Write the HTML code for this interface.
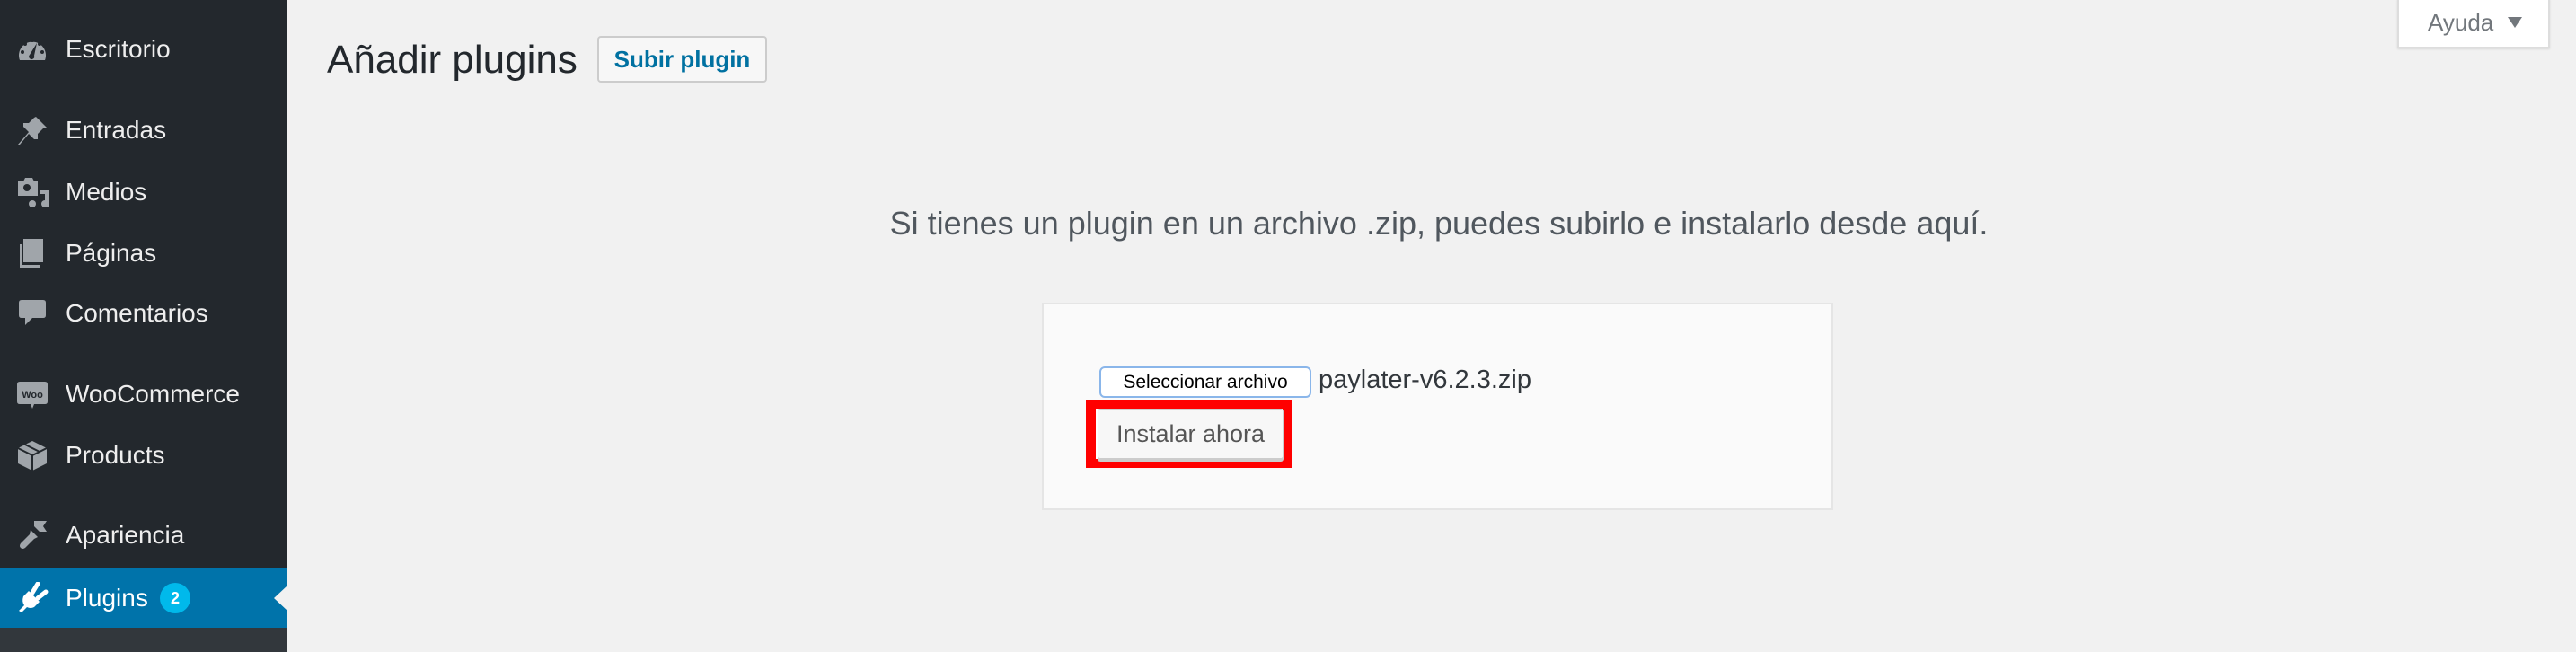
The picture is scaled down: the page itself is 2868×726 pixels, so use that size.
<!DOCTYPE html>
<html><head><meta charset="utf-8"><style>
*{margin:0;padding:0;box-sizing:border-box}
body{width:2868px;height:726px;background:#f1f1f1;font-family:"Liberation Sans",Arial,sans-serif;position:relative;overflow:hidden}
#side{position:absolute;left:0;top:0;width:320px;height:726px;background:#23282d}
.mi{position:absolute;left:0;width:320px;height:40px;color:#eee;font-size:28px;line-height:40px}
.mi span{position:absolute;left:73px;top:0}
.mi svg{position:absolute;left:18px;top:2px;width:36px;height:36px}
#act{position:absolute;left:0;top:633px;width:320px;height:66px;background:#0073aa}
#sub{position:absolute;left:0;top:699px;width:320px;height:27px;background:#32373c}
.abs{position:absolute}
</style></head><body>
<div id="side">
<div id="act"></div><div id="sub"></div>
<div class="mi" style="top:35px"><svg viewBox="0 0 36 36"><path d="M4 30A15 15 0 1 1 32 30Z" fill="#a0a5aa"/><circle cx="7" cy="21" r="2" fill="#23282d"/><circle cx="10" cy="12" r="2" fill="#23282d"/><circle cx="18" cy="8" r="2" fill="#23282d"/><circle cx="26" cy="12" r="2" fill="#23282d"/><circle cx="29" cy="21" r="2" fill="#23282d"/><path d="M23 11L20 25A3 3 0 1 1 15 24Z" fill="#23282d"/></svg><span>Escritorio</span></div>
<div class="mi" style="top:125px"><svg viewBox="0 0 36 36"><path d="M22 3L34 15L30 16L24 22L24 28L20 28L14 22L4 34L2 34L14 20L8 14L8 10L14 10L20 4Z" fill="#a0a5aa"/></svg><span>Entradas</span></div>
<div class="mi" style="top:194px"><svg viewBox="0 0 36 36"><path d="M2 6h6l2-4h8l2 4h4v16h-22z" fill="#a0a5aa"/><circle cx="12" cy="13" r="4" fill="#23282d"/><path d="M26 16h10v18h-4v-14h-6z" fill="#a0a5aa"/><circle cx="18" cy="31" r="4" fill="#a0a5aa"/><circle cx="32" cy="31" r="4" fill="#a0a5aa"/></svg><span>Medios</span></div>
<div class="mi" style="top:262px"><svg viewBox="0 0 36 36"><path d="M8 2h22v26h-22z" fill="#a0a5aa"/><path d="M4 8h3v23h19v3h-22z" fill="#a0a5aa"/></svg><span>Páginas</span></div>
<div class="mi" style="top:329px"><svg viewBox="0 0 36 36"><path d="M6 3h24q3 0 3 3v14q0 3-3 3h-12l-8 8v-8h-4q-3 0-3-3v-14q0-3 3-3z" fill="#a0a5aa"/></svg><span>Comentarios</span></div>
<div class="mi" style="top:419px"><svg viewBox="0 0 36 36"><path d="M4 4h28q3 0 3 3v19q0 3-3 3h-12l-2 5-2-5h-12q-3 0-3-3v-19q0-3 3-3z" fill="#a0a5aa"/><text x="18" y="22" font-size="11" font-weight="bold" text-anchor="middle" fill="#23282d" font-family="Liberation Sans">Woo</text></svg><span>WooCommerce</span></div>
<div class="mi" style="top:487px"><svg viewBox="0 0 36 36"><path d="M18 2L34 10V27L18 35L2 27V10Z" fill="#a0a5aa"/><path d="M2 10L18 18L34 10M18 18V35M10 6L26 14" stroke="#23282d" stroke-width="2" fill="none"/></svg><span>Products</span></div>
<div class="mi" style="top:576px"><svg viewBox="0 0 36 36"><path d="M20 2h14l-4 6 4 6-8 0-6-6z" fill="#a0a5aa"/><path d="M16 12l8 8-4 2-10 10q-3 2-5 0 -2-2 0-5l10-10z" fill="#a0a5aa"/></svg><span>Apariencia</span></div>
<div class="mi" style="top:646px;color:#fff"><svg viewBox="0 0 36 36"><path d="M14 10L26 22L20 28Q16 30 12 28L6 34L3 32L9 26Q6 22 8 16Z" fill="#fff"/><path d="M18 12L24 2M24 18L33 11" stroke="#fff" stroke-width="5" stroke-linecap="round"/></svg><span>Plugins</span>
<div class="abs" style="left:178px;top:3px;width:34px;height:34px;border-radius:17px;background:#00b9eb;color:#fff;font-size:18px;font-weight:bold;line-height:34px;text-align:center">2</div></div>
<div class="abs" style="left:305px;top:652px;width:0;height:0;border-top:14px solid transparent;border-bottom:14px solid transparent;border-right:15px solid #f1f1f1"></div>
</div>

<div class="abs" style="left:364px;top:39px;font-size:44px;color:#23282d;line-height:56px">Añadir plugins</div>
<div class="abs" style="left:665px;top:40px;width:189px;height:52px;border:2px solid #ccc;border-radius:4px;background:#f7f7f7;color:#0071a1;font-size:26px;font-weight:bold;line-height:48px;text-align:center">Subir plugin</div>

<div class="abs" style="left:2669px;top:-2px;width:170px;height:56px;background:#fff;border:2px solid #ddd;border-top:none;box-shadow:0 1px 2px rgba(0,0,0,.1);color:#72777c;font-size:26px;line-height:54px"><span style="position:absolute;left:32px">Ayuda</span><span style="position:absolute;left:121px;top:-1px;width:0;height:0;border-left:8px solid transparent;border-right:8px solid transparent;border-top:12px solid #72777c;margin-top:22px"></span></div>

<div class="abs" style="left:800px;top:226px;width:1604px;text-align:center;font-size:36px;color:#50575e;line-height:46px">Si tienes un plugin en un archivo .zip, puedes subirlo e instalarlo desde aquí.</div>

<div class="abs" style="left:1160px;top:337px;width:881px;height:231px;background:#fafafa;border:2px solid #e5e5e5"></div>
<div class="abs" style="left:1224px;top:408px;width:236px;height:35px;background:#fff;border:2px solid #8ab6ea;border-radius:6px;font-size:21px;color:#000;line-height:31px;text-align:center">Seleccionar archivo</div>
<div class="abs" style="left:1468px;top:403px;font-size:29px;color:#32373c;line-height:40px">paylater-v6.2.3.zip</div>
<div class="abs" style="left:1209px;top:445px;width:230px;height:76px;border:11px solid #ff0000;border-top-width:10px;border-bottom-width:10px;background:#fff"></div>
<div class="abs" style="left:1222px;top:455px;width:207px;height:56px;background:#f7f7f7;border:1px solid #ccc;box-shadow:0 3px 0 #ccc;border-radius:3px;font-size:27px;color:#555;line-height:54px;text-align:center">Instalar ahora</div>
</body></html>
